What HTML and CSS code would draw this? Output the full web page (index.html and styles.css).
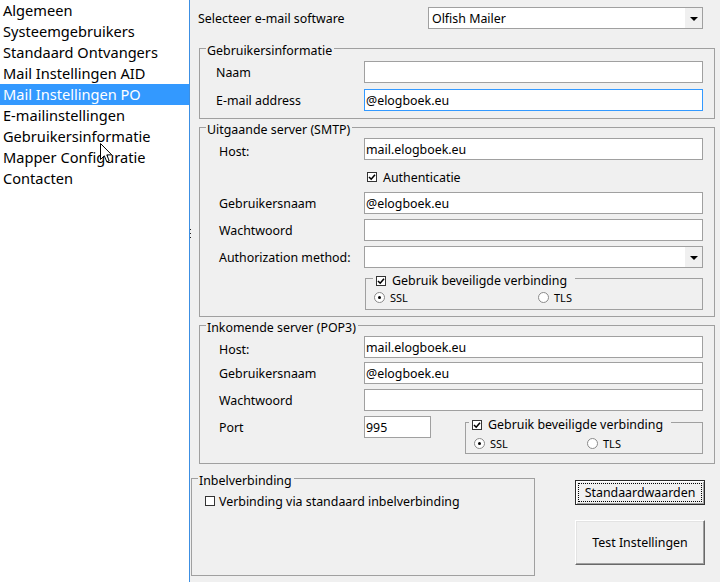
FILE: index.html
```html
<!DOCTYPE html>
<html lang="nl">
<head>
<meta charset="utf-8">
<title>Mail Instellingen PO</title>
<link rel="stylesheet" href="styles.css">
</head>
<body>
<div class="app">
  <aside class="sidebar">
    <ul class="nav">
      <li>Algemeen</li>
      <li>Systeemgebruikers</li>
      <li>Standaard Ontvangers</li>
      <li>Mail Instellingen AID</li>
      <li class="active">Mail Instellingen PO</li>
      <li>E-mailinstellingen</li>
      <li>Gebruikersinformatie</li>
      <li>Mapper Configuratie</li>
      <li>Contacten</li>
    </ul>
    <svg class="cursor" viewBox="0 0 13 21" width="13" height="21">
      <path d="M0.5 0.5 L0.5 16.5 L4.3 12.8 L6.8 18.8 L9.2 17.8 L6.8 11.9 L11.8 11.9 Z" fill="#fff" stroke="#000" stroke-width="1" stroke-linejoin="miter"/>
    </svg>
  </aside>
  <div class="splitter"><span class="grip"></span></div>
  <main class="main">
    <div class="top-row">
      <span class="top-label">Selecteer e-mail software</span>
      <div class="combo combo-top">
        <span class="combo-text">Olfish Mailer</span>
        <span class="combo-btn"><span class="arrow"></span></span>
      </div>
    </div>

    <section class="group g1">
      <div class="group-title">Gebruikersinformatie</div>
      <div class="row r-naam"><span class="lbl">Naam</span><div class="input"></div></div>
      <div class="row r-mail"><span class="lbl">E-mail address</span><div class="input focus">@elogboek.eu</div></div>
    </section>

    <section class="group g2 indent">
      <div class="group-title">Uitgaande server (SMTP)</div>
      <div class="row r-host"><span class="lbl host">Host:</span><div class="input">mail.elogboek.eu</div></div>
      <div class="row r-auth">
        <span></span>
        <label class="check-line"><span class="check checked"><svg viewBox="0 0 8 8" width="8" height="8"><polyline points="1,4 3.2,6.2 7,1.8" fill="none" stroke="#000" stroke-width="1.6"/></svg></span>Authenticatie</label>
      </div>
      <div class="row r-user"><span class="lbl">Gebruikersnaam</span><div class="input">@elogboek.eu</div></div>
      <div class="row r-pass"><span class="lbl">Wachtwoord</span><div class="input"></div></div>
      <div class="row r-method">
        <span class="lbl">Authorization method:</span>
        <div class="combo"><span class="combo-text"></span><span class="combo-btn"><span class="arrow"></span></span></div>
      </div>
      <div class="row r-secure">
        <span></span>
        <div class="subgroup sub-out">
          <div class="sub-legend"><span class="check checked"><svg viewBox="0 0 8 8" width="8" height="8"><polyline points="1,4 3.2,6.2 7,1.8" fill="none" stroke="#000" stroke-width="1.6"/></svg></span>Gebruik beveiligde verbinding</div>
          <div class="radios">
            <label class="radio-line"><span class="radio on"></span>SSL</label>
            <label class="radio-line"><span class="radio"></span>TLS</label>
          </div>
        </div>
      </div>
    </section>

    <section class="group g3 indent">
      <div class="group-title">Inkomende server (POP3)</div>
      <div class="row r-host"><span class="lbl host">Host:</span><div class="input">mail.elogboek.eu</div></div>
      <div class="row r-user"><span class="lbl">Gebruikersnaam</span><div class="input">@elogboek.eu</div></div>
      <div class="row r-pass"><span class="lbl">Wachtwoord</span><div class="input"></div></div>
      <div class="row r-port">
        <span class="lbl">Port</span>
        <div class="port-cell">
          <div class="input port">995</div>
          <div class="subgroup sub-in">
            <div class="sub-legend"><span class="check checked"><svg viewBox="0 0 8 8" width="8" height="8"><polyline points="1,4 3.2,6.2 7,1.8" fill="none" stroke="#000" stroke-width="1.6"/></svg></span>Gebruik beveiligde verbinding</div>
            <div class="radios">
              <label class="radio-line"><span class="radio on"></span>SSL</label>
              <label class="radio-line"><span class="radio"></span>TLS</label>
            </div>
          </div>
        </div>
      </div>
    </section>

    <div class="bottom">
      <section class="inbel">
        <div class="group-title">Inbelverbinding</div>
        <label class="check-line inbel-check"><span class="check"></span>Verbinding via standaard inbelverbinding</label>
      </section>
      <div class="buttons">
        <button class="btn btn-default"><span class="focus-rect">Standaardwaarden</span></button>
        <button class="btn btn-test">Test Instellingen</button>
      </div>
    </div>
  </main>
</div>
</body>
</html>
```

FILE: styles.css
```css
* {
  box-sizing: border-box;
}

html,
body {
  margin: 0;
  padding: 0;
}

body {
  width: 720px;
  height: 582px;
  overflow: hidden;
  background: #f0f0f0;
  color: #000;
  font-family: "Noto Sans", "Open Sans", sans-serif;
}

.app {
  display: flex;
  height: 582px;
}

/* ---------- sidebar ---------- */
.sidebar {
  position: relative;
  flex: none;
  width: 189px;
  background: #fff;
}

.nav {
  list-style: none;
  margin: 0;
  padding: 0;
  font-size: 14.6px;
}

.nav li {
  height: 21px;
  line-height: 21px;
  padding-left: 3px;
  white-space: nowrap;
}

.nav li.active {
  background: #3399ff;
  color: #fff;
}

.cursor {
  position: absolute;
  left: 100px;
  top: 143px;
}

.splitter {
  position: relative;
  flex: none;
  width: 1px;
  background: #3c8fe3;
}

.grip {
  position: absolute;
  left: 1px;
  top: 229px;
  width: 1px;
  height: 9px;
  background: repeating-linear-gradient(to bottom, #222 0 1px, transparent 1px 4px);
}

/* ---------- main panel ---------- */
.main {
  flex: 1;
  padding: 7px 5px 0 9px;
  font-size: 12.4px;
}

.top-row {
  display: flex;
  align-items: center;
  height: 22px;
}

.top-label {
  margin-left: -1px;
}

.combo {
  display: flex;
  height: 22px;
  background: #fff;
  border: 1px solid #a0a0a0;
}

.combo-top {
  width: 275px;
  margin-left: auto;
  margin-right: 12px;
}

.combo-text {
  flex: 1;
  padding-left: 3px;
  line-height: 21px;
}

.combo-btn {
  display: flex;
  align-items: center;
  justify-content: center;
  width: 17px;
  background: #f0f0f0;
}

.arrow {
  width: 0;
  height: 0;
  border-left: 4px solid transparent;
  border-right: 4px solid transparent;
  border-top: 4px solid #000;
  margin-top: 1px;
}

.input {
  height: 22px;
  background: #fff;
  border: 1px solid #a0a0a0;
  padding-left: 1px;
  line-height: 21px;
  white-space: nowrap;
  overflow: hidden;
}

.input.focus {
  border-color: #3399ff;
}

/* ---------- groups ---------- */
.group {
  border: 1px solid #a0a0a0;
}

.group-title {
  width: max-content;
  height: 15px;
  line-height: 17px;
  margin: -7px 0 0 6px;
  padding: 0 2px 0 1px;
  background: #f0f0f0;
}

.row {
  display: grid;
  grid-template-columns: 148px 1fr;
  padding: 0 11px 0 16px;
}

.lbl {
  height: 22px;
  line-height: 24px;
  white-space: nowrap;
}

.indent .lbl {
  padding-left: 3px;
}

.lbl.host {
  padding-top: 2px;
}

.g1 {
  margin-top: 19px;
  padding-bottom: 7px;
}

.g1 .r-naam { margin-top: 4px; }
.g1 .r-mail { margin-top: 6px; }

.g2 {
  margin-top: 8px;
  padding-bottom: 6px;
}

.g2 .r-host { margin-top: 2px; }
.g2 .r-auth { margin-top: 9px; }
.g2 .r-user { margin-top: 7px; }
.g2 .r-pass { margin-top: 5px; }
.g2 .r-method { margin-top: 5px; }
.g2 .r-secure { margin-top: 10px; }

.g3 {
  margin-top: 8px;
  padding-bottom: 9px;
}

.g3 .r-host { margin-top: 2px; }
.g3 .r-user { margin-top: 4px; }
.g3 .r-pass { margin-top: 5px; }
.g3 .r-port { margin-top: 5px; }

.port-cell {
  display: flex;
  align-items: flex-start;
}

.input.port {
  width: 67px;
}

/* ---------- checkboxes ---------- */
.check-line {
  display: flex;
  align-items: center;
  height: 16px;
  white-space: nowrap;
}

.r-auth .check-line {
  padding-left: 3px;
}

.check {
  display: flex;
  align-items: center;
  justify-content: center;
  flex: none;
  width: 10px;
  height: 10px;
  border: 1px solid #333;
  background: #fff;
}

.check-line .check {
  margin-right: 6px;
}

/* ---------- sub groups ---------- */
.subgroup {
  border: 1px solid #a0a0a0;
}

.sub-out {
  width: 338px;
  margin-left: 1px;
  padding-bottom: 4px;
}

.sub-in {
  width: 238px;
  margin: 6px 0 0 34px;
  padding-bottom: 2px;
}

.sub-legend {
  display: flex;
  align-items: center;
  width: max-content;
  height: 15px;
  line-height: 15px;
  margin-top: -6px;
  padding: 0 8px 0 3px;
  background: #f0f0f0;
  white-space: nowrap;
}

.sub-out .sub-legend {
  margin-left: 7px;
}

.sub-in .sub-legend {
  margin-left: 3px;
}

.sub-legend .check {
  margin-right: 6px;
}

.radios {
  display: grid;
  padding-left: 8px;
  font-size: 11px;
}

.sub-out .radios {
  grid-template-columns: 164px auto;
  margin-top: 1px;
}

.sub-in .radios {
  grid-template-columns: 113px auto;
  margin-top: 3px;
}

.radio-line {
  display: flex;
  align-items: center;
  height: 16px;
}

.radio {
  display: flex;
  align-items: center;
  justify-content: center;
  flex: none;
  width: 11px;
  height: 11px;
  margin-right: 5px;
  border: 1px solid #8a8a8a;
  border-radius: 50%;
  background: #fff;
}

.radio.on::after {
  content: "";
  width: 3px;
  height: 3px;
  border-radius: 50%;
  background: #000;
}

/* ---------- bottom ---------- */
.bottom {
  display: flex;
  align-items: flex-start;
  margin-top: 14px;
}

.inbel {
  width: 344px;
  height: 98px;
  margin-left: -8px;
  border: 1px solid #a0a0a0;
}

.inbel-check {
  margin-top: 6px;
  padding-left: 13px;
}

.inbel-check .check {
  margin-right: 4px;
}

.buttons {
  display: flex;
  flex-direction: column;
  gap: 15px;
  width: 130px;
  margin: 2px 10px 0 auto;
}

.btn {
  position: relative;
  display: flex;
  align-items: center;
  justify-content: center;
  margin: 0;
  padding: 0;
  font: inherit;
  color: #000;
  background: #f0f0f0;
}

.btn-default {
  height: 25px;
  border: 1px solid #2b2b2b;
  box-shadow: inset 1px 1px 0 #fff, inset -1px -1px 0 #a0a0a0;
}

.focus-rect {
  position: absolute;
  left: 3px;
  right: 3px;
  top: 3px;
  bottom: 3px;
  display: flex;
  align-items: center;
  justify-content: center;
  outline: 1px dotted #000;
}

.btn-test {
  height: 45px;
  border-top: 1px solid #fff;
  border-left: 1px solid #fff;
  border-right: 1px solid #696969;
  border-bottom: 1px solid #696969;
  box-shadow: inset -1px -1px 0 #a0a0a0, inset 1px 1px 0 #e3e3e3;
}
```
